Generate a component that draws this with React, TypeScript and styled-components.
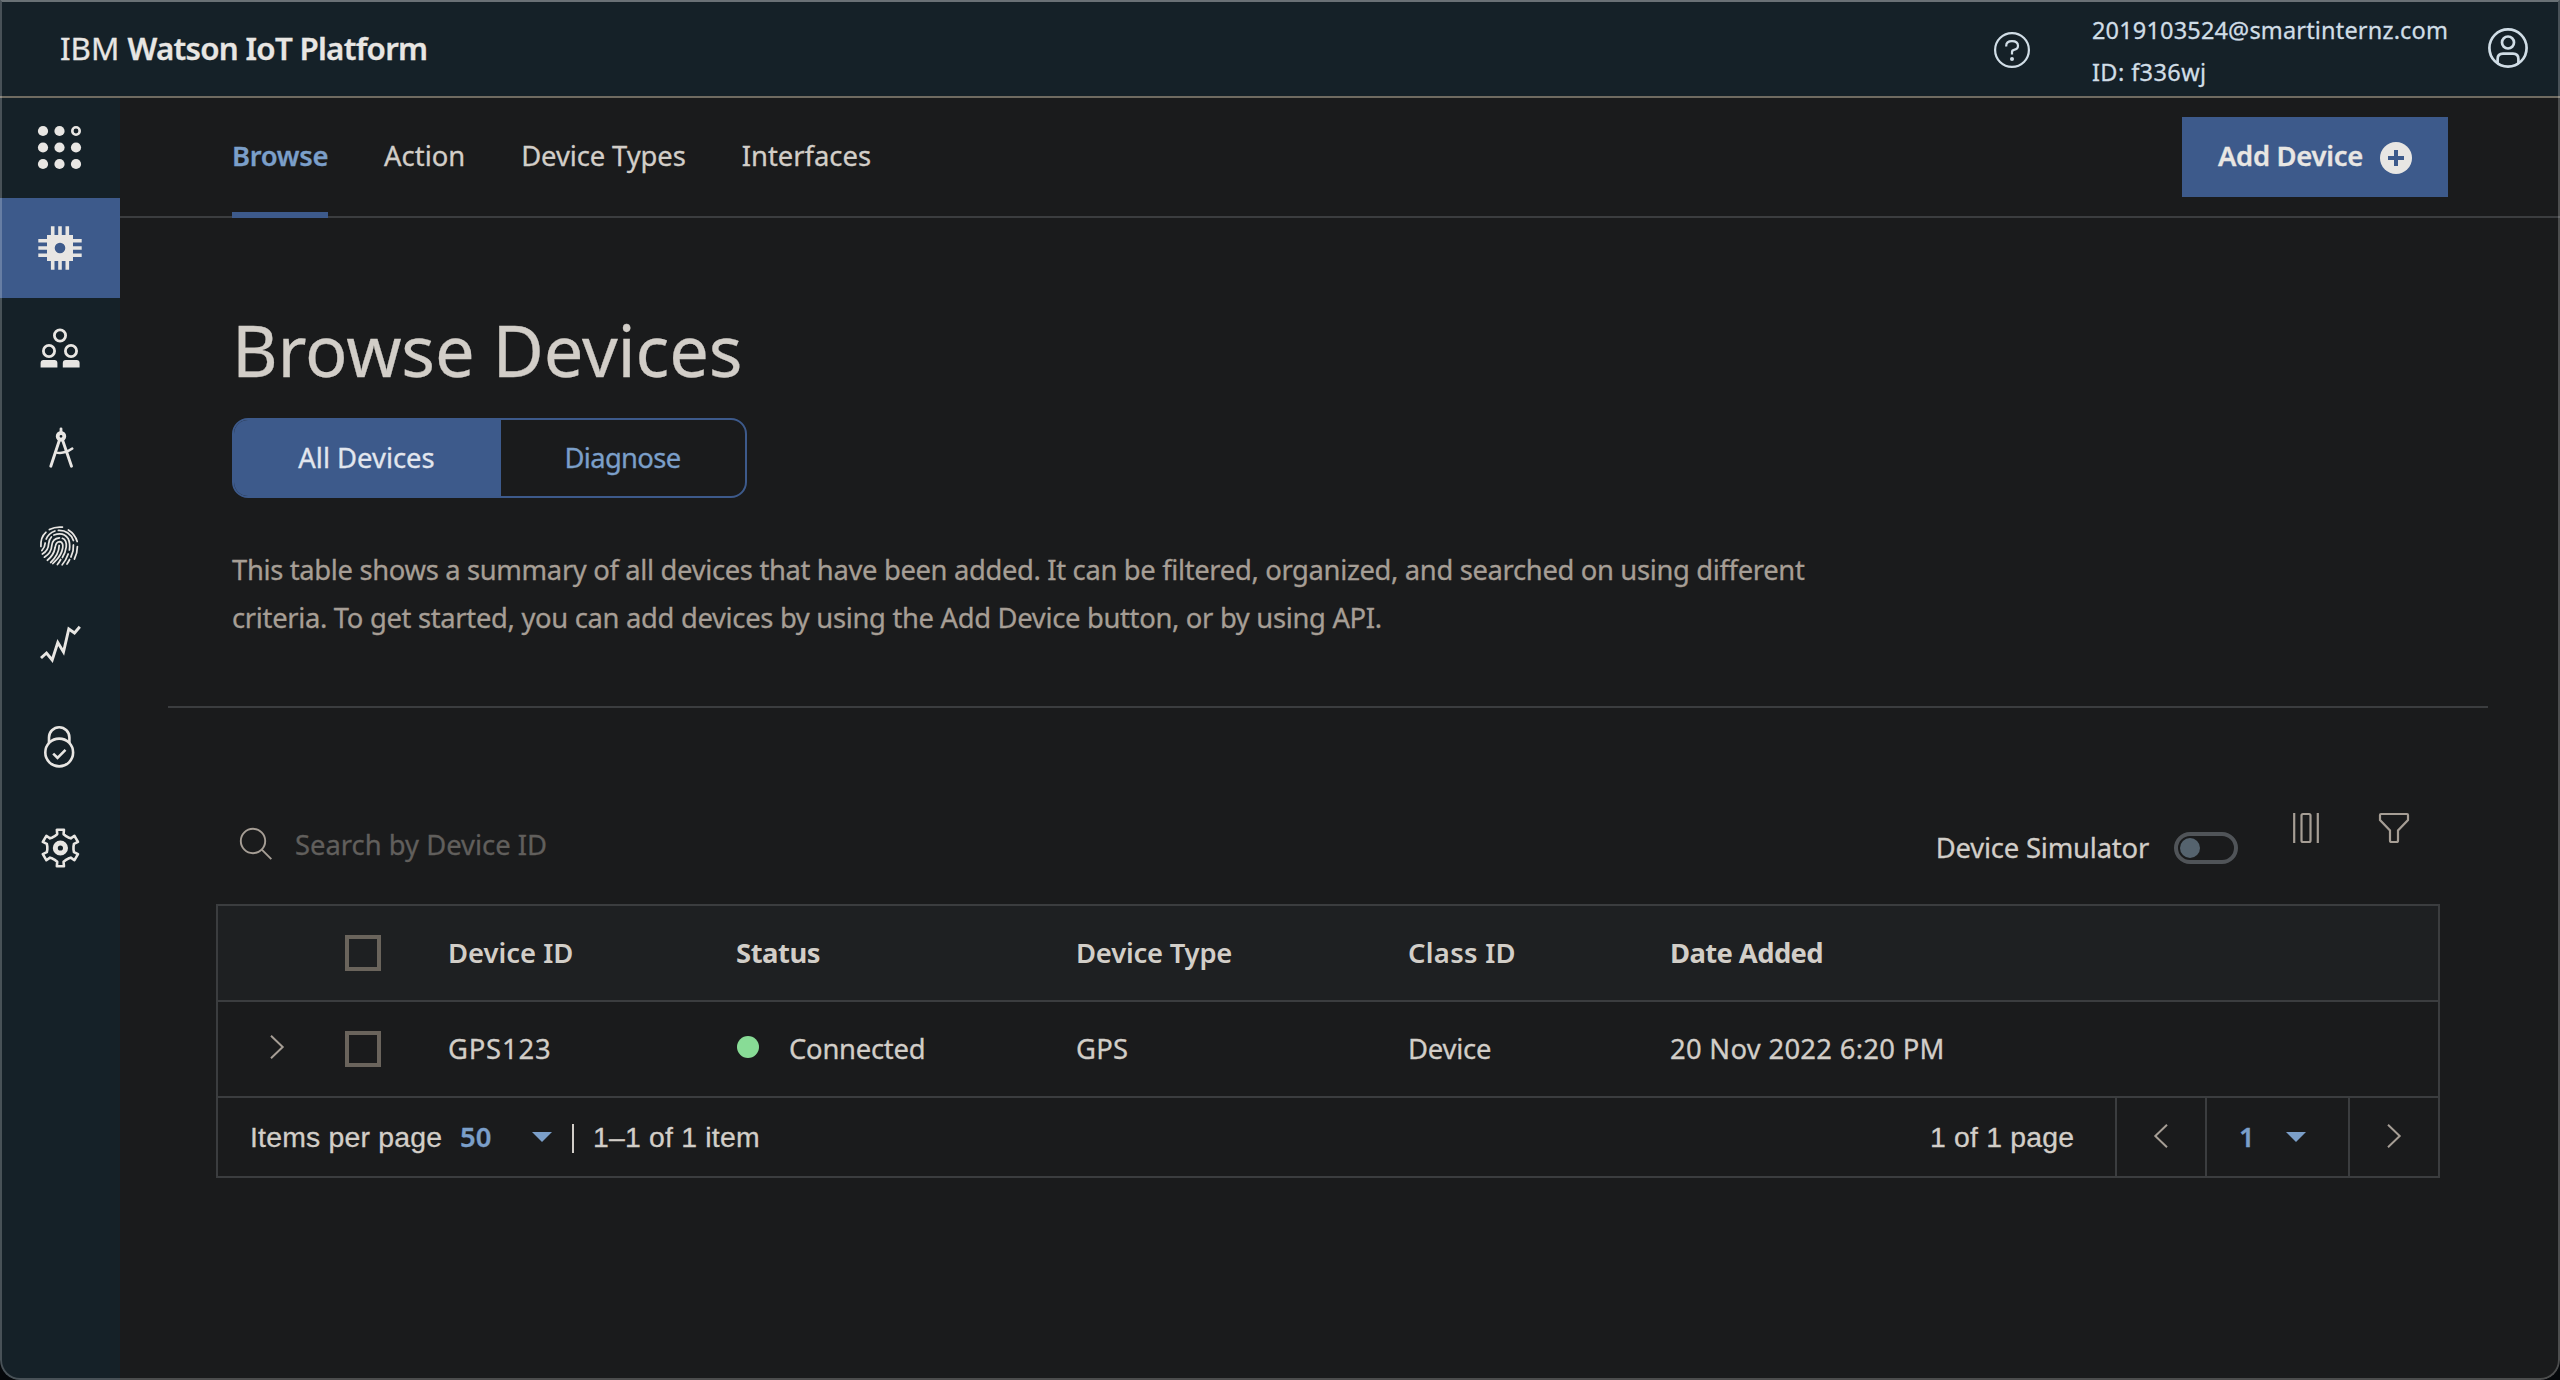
import React from 'react';
import styled, { createGlobalStyle } from 'styled-components';

const c = {
  bg: '#1a1b1c',
  shell: '#152128',
  headRow: '#1e2022',
  blue: '#3d5a8b',
  link: '#7b9fc9',
  text: '#d2cec8',
  muted: '#a69e95',
  white: '#e8e6e3',
  ice: '#d0dde6',
  line: '#3b3d3f',
};

const Global = createGlobalStyle`
  *, *::before, *::after { box-sizing: border-box; }
  body {
    margin: 0;
    background: #05080b;
    font-family: "Noto Sans", "Open Sans", sans-serif;
    font-size: 27.4px;
    font-weight: 400;
    -webkit-text-stroke: 0.3px currentColor;
    color: ${c.text};
  }
  button, input { font: inherit; color: inherit; background: none; border: 0; padding: 0; margin: 0; }
  svg { display: block; flex: none; overflow: visible; }
`;

const Window = styled.div`
  position: relative;
  display: grid;
  grid-template-rows: 98px 1fr;
  width: 2560px;
  height: 1380px;
  overflow: hidden;
  background: ${c.bg};
  border-radius: 0 0 20px 20px;
  &::after {
    content: '';
    position: absolute;
    inset: 0;
    pointer-events: none;
    border: 2px solid rgba(255, 255, 255, 0.22);
    border-top-color: rgba(255, 255, 255, 0.36);
    border-radius: 0 0 20px 20px;
  }
`;

const Track = styled.span<{ $s?: number }>`
  letter-spacing: ${(p) => p.$s ?? 0}px;
  white-space: nowrap;
`;

const Header = styled.header`
  display: flex;
  align-items: center;
  padding: 0 32px 0 60px;
  background: ${c.shell};
  border-bottom: 2px solid #6f6b61;
`;

const Brand = styled.div`
  flex: 1;
  font-size: 31.3px;
  color: ${c.white};
  white-space: pre;
  b { font-weight: 600; letter-spacing: -0.72px; }
`;

const Help = styled.div`
  padding-top: 4px;
  margin-right: 62px;
`;

const Account = styled.div`
  display: flex;
  flex-direction: column;
  width: 396px;
  padding-top: 6px;
  font-size: 23.5px;
  line-height: 42px;
  color: ${c.ice};
`;

const Body = styled.div`
  display: grid;
  grid-template-columns: 120px 1fr;
`;

const Sidebar = styled.nav`
  background: ${c.shell};
`;

const SideItem = styled.div<{ $active?: boolean; $lift?: number }>`
  display: flex;
  align-items: center;
  justify-content: center;
  height: 100px;
  padding: 0 1px ${(p) => (p.$lift ?? 0) * 2}px 0;
  background: ${(p) => (p.$active ? c.blue : 'transparent')};
`;

const Main = styled.main`
  display: flex;
  flex-direction: column;
`;

const TabBar = styled.div`
  display: flex;
  justify-content: space-between;
  height: 120px;
  padding: 0 112px;
  border-bottom: 2px solid ${c.line};
`;

const Tabs = styled.div`
  display: flex;
  gap: 56px;
  height: 120px;
`;

const Tab = styled.div<{ $active?: boolean }>`
  display: flex;
  align-items: center;
  height: 120px;
  padding: ${(p) => (p.$active ? '0' : '0 0 6px')};
  border-bottom: ${(p) => (p.$active ? `6px solid ${c.blue}` : '0')};
  color: ${(p) => (p.$active ? c.link : c.text)};
  font-weight: ${(p) => (p.$active ? 600 : 'inherit')};
`;

const AddButton = styled.button`
  display: flex;
  align-items: center;
  justify-content: space-between;
  width: 266px;
  height: 80px;
  margin-top: 19px;
  padding: 0 36px 3px;
  background: ${c.blue};
  color: ${c.white};
  font-weight: 600;
`;

const Intro = styled.section`
  height: 490px;
  margin: 0 72px 0 48px;
  padding: 88px 64px 0;
  border-bottom: 2px solid ${c.line};
`;

const Title = styled.h1`
  margin: 0 0 24px;
  font-size: 70.4px;
  font-weight: 400;
  line-height: 88px;
  letter-spacing: -0.15px;
`;

const Segments = styled.div`
  display: flex;
  width: 515px;
  height: 80px;
  border: 2px solid ${c.blue};
  border-radius: 16px;
  overflow: hidden;
`;

const Segment = styled.button<{ $active?: boolean }>`
  width: ${(p) => (p.$active ? 267 : 244)}px;
  padding: 0 ${(p) => (p.$active ? 2 : 1)}px 2px 0;
  background: ${(p) => (p.$active ? c.blue : 'transparent')};
  color: ${(p) => (p.$active ? '#e2e6ee' : c.link)};
`;

const Description = styled.p`
  display: flex;
  flex-direction: column;
  margin: 48px 0 0;
  line-height: 48px;
  color: ${c.muted};
`;

const Toolbar = styled.div`
  display: flex;
  align-items: center;
  height: 80px;
  margin: 96px 120px 20px 96px;
  padding: 0 31px 0 24px;
`;

const SearchField = styled.label`
  display: flex;
  flex: 1;
  align-items: center;
  gap: 23px;
  input { width: 600px; height: 44px; outline: none; }
  input::placeholder { color: #615f5c; opacity: 1; }
`;

const SimulatorToggle = styled.div`
  display: flex;
  align-items: center;
  gap: 25px;
  padding-top: 8px;
  > span { padding-bottom: 2px; }
`;

const Switch = styled.div`
  display: flex;
  align-items: center;
  width: 64px;
  height: 32px;
  padding-left: 2px;
  border: 4px solid #505458;
  border-radius: 16px;
  &::before {
    content: '';
    width: 20px;
    height: 20px;
    border-radius: 50%;
    background: #55636e;
  }
`;

const ToolIcons = styled.div`
  display: flex;
  gap: 60px;
  margin-left: 55px;
  padding-bottom: 32px;
`;

const Table = styled.section`
  margin: 0 120px 0 96px;
  border: 2px solid ${c.line};
`;

const Row = styled.div<{ $head?: boolean }>`
  display: grid;
  grid-template-columns: 127px 103px 288px 340px 332px 262px 1fr;
  align-items: center;
  height: 96px;
  border-bottom: 2px solid ${c.line};
  background: ${(p) => (p.$head ? c.headRow : 'transparent')};
`;

const HeadCell = styled.div<{ $w: number }>`
  padding-bottom: 2px;
  font-weight: ${(p) => p.$w};
  -webkit-text-stroke: 0;
`;

const Cell = styled.div`
  padding-bottom: 2px;
`;

const Expand = styled.div`
  padding: 0 0 5px 52px;
`;

const Checkbox = styled.div`
  width: 36px;
  height: 36px;
  border: 4px solid #6a645c;
`;

const Status = styled.div`
  display: flex;
  align-items: center;
  gap: 30px;
  padding: 0 0 2px 1px;
  &::before {
    content: '';
    width: 22px;
    height: 22px;
    margin-top: -2px;
    border-radius: 50%;
    background: #88dc96;
  }
`;

const Pagination = styled.div`
  display: flex;
  align-items: center;
  height: 78px;
  font-family: "Liberation Sans", Arial, sans-serif;
  font-size: 28.4px;
`;

const PerPage = styled.div`
  display: flex;
  flex: 1;
  align-items: center;
  padding-left: 32px;
`;

const Picked = styled.span<{ $w: number }>`
  width: ${(p) => p.$w}px;
  padding: 0 0 2px 1px;
  font-family: "Noto Sans", sans-serif;
  font-size: 27.4px;
  font-weight: 600;
  color: ${c.link};
`;

const Label = styled.span<{ $w: number }>`
  width: ${(p) => p.$w}px;
  padding-top: 1px;
  letter-spacing: 0.2px;
  white-space: nowrap;
`;

const Bar = styled.span`
  width: 2px;
  height: 29px;
  margin: 2px 19px 0 20px;
  background: ${c.text};
`;

const PageCell = styled.div<{ $w: number; $wide?: boolean }>`
  display: flex;
  align-items: center;
  justify-content: ${(p) => (p.$wide ? 'flex-start' : 'center')};
  width: ${(p) => p.$w}px;
  height: 78px;
  padding: ${(p) => (p.$wide ? '0 0 0 31px' : '0 0 3px')};
  border-left: 2px solid ${c.line};
`;

const stroke = (color: string, width: number) => ({ fill: 'none', stroke: color, strokeWidth: width });

const Caret = () => (
  <svg width="20" height="10" viewBox="0 0 20 10"><path d="M0 0H20L10 10Z" fill={c.link} /></svg>
);

const Chevron = ({ left }: { left?: boolean }) => (
  <svg width="14" height="24" viewBox="0 0 14 24">
    <path d={left ? 'M13 .7L1.3 12L13 23.3' : 'M1 .7L12.7 12L1 23.3'} {...stroke(c.muted, 2)} />
  </svg>
);

const AppsIcon = () => (
  <svg width="43" height="43" viewBox="0 0 43 43">
    {[5, 21.5, 38].map((y) =>
      [5, 21.5, 38].map((x) =>
        x === 38 && y === 5 ? (
          <circle key={`${x}-${y}`} cx={x} cy={y} r="3.7" {...stroke(c.white, 2.6)} />
        ) : (
          <circle key={`${x}-${y}`} cx={x} cy={y} r="5.1" fill={c.white} />
        ),
      ),
    )}
  </svg>
);

const ChipIcon = () => (
  <svg width="44" height="44" viewBox="0 0 44 44">
    <path fill={c.white} fillRule="evenodd" d="M9 9H35V35H9ZM22 16.7a5.3 5.3 0 1 0 0 10.6a5.3 5.3 0 1 0 0-10.6Z" />
    <path {...stroke(c.white, 3.6)} d="M14.7 .3V10M22 .3V10M29.3 .3V10M14.7 34V43.7M22 34V43.7M29.3 34V43.7M.3 14.7H10M.3 22H10M.3 29.3H10M34 14.7H43.7M34 22H43.7M34 29.3H43.7" />
  </svg>
);

const PeopleIcon = () => (
  <svg width="40" height="40" viewBox="0 0 40 40">
    <g {...stroke(c.white, 2.8)}>
      <circle cx="20" cy="7.5" r="5.6" />
      <circle cx="9" cy="23" r="5.6" />
      <circle cx="31" cy="23" r="5.6" />
    </g>
    <path fill={c.white} d="M.6 39.5V35Q.6 32 3.6 32H14.4Q17.4 32 17.4 35V39.5ZM22.8 39.5V35Q22.8 32 25.8 32H36.6Q39.6 32 39.6 35V39.5Z" />
  </svg>
);

const CompassIcon = () => (
  <svg width="38" height="40" viewBox="0 0 38 40">
    <circle cx="20" cy="8.3" r="3.3" {...stroke(c.white, 3.8)} />
    <path d="M20 .8V4" {...stroke(c.white, 2.8)} strokeLinecap="round" />
    <path d="M18.3 12.5L9.8 38.2M21.7 12.5L30.5 38.2" {...stroke(c.white, 2.9)} strokeLinecap="round" />
    <path d="M14.5 24.4Q23 26.5 31.3 20.6" {...stroke(c.white, 2.5)} strokeLinecap="round" />
  </svg>
);

const FingerprintIcon = () => (
  <svg width="40" height="40" viewBox="0 0 40 40">
    <path
      {...stroke(c.white, 1.75)}
      strokeLinecap="round"
      transform="translate(-.6 0)"
      d="M10 3.6Q16 .4 23 1.2M29 4Q35.5 8 37.8 15.5M1.5 20.5Q1 11 6.5 6.3M2.5 24.5Q5.6 21 5.8 17M6.8 13Q9 7.5 15.5 5M19 4.4Q30 4 34 14.5M3 28Q9 24.5 9.2 18Q9.6 13.5 12 11M14.5 9Q24 5.5 28.7 12.5Q31 17 30 24M5 31.2Q12 27 12.4 19.5Q13 12.5 20 11.8M23 12.3Q27.5 14 26.8 21Q26 27 23 31.5M8 34.2Q14.5 29 15.7 21.5Q16.5 15.5 20.5 15.6Q24.2 16.5 23.3 22Q22 29 16.5 34.5M19.8 19.5Q19.5 28.5 11.3 36.5M34 19Q34.5 25 31.5 31M38 20.5Q38 27 35 33M28.8 28Q26.5 34.5 22.8 38.8M21.3 33.5Q20 36 18 38.5M16 34.8L13.5 37.5M30.2 33.5Q29 36 27.6 38"
    />
  </svg>
);

const TrendIcon = () => (
  <svg width="40" height="38" viewBox="0 0 40 38">
    <path d="M1 32L6.5 27L12.2 34L17.8 16.5L23.5 26L28.8 3L34.5 7L39.8 .8" {...stroke(c.white, 2.9)} />
  </svg>
);

const LockIcon = () => (
  <svg width="32" height="42" viewBox="0 0 32 42">
    <g {...stroke(c.white, 2.6)}>
      <circle cx="15.2" cy="26.5" r="13.9" />
      <path d="M5 17V11.5A10.2 10.2 0 0 1 25.4 11.5V17M9.2 27.6L13.5 31.8L21.5 23.8" />
    </g>
  </svg>
);

const gearPoints = Array.from({ length: 6 }, (_, i) =>
  [[-23, 13.2], [-13, 14.2], [-11, 18.6], [11, 18.6], [13, 14.2], [23, 13.2]].map(([off, r]) => {
    const a = ((i * 60 + off) * Math.PI) / 180;
    return `${(20.4 + r * Math.sin(a)).toFixed(2)},${(20 - r * Math.cos(a)).toFixed(2)}`;
  }),
).flat().join(' ');

const GearIcon = () => (
  <svg width="40" height="40" viewBox="0 0 40 40">
    <polygon points={gearPoints} {...stroke(c.white, 2.6)} strokeLinejoin="round" />
    <circle cx="20.4" cy="20" r="5.1" {...stroke(c.white, 5)} />
  </svg>
);

const HelpIcon = () => (
  <svg width="36" height="36" viewBox="0 0 36 36">
    <circle cx="18" cy="18" r="16.9" {...stroke(c.ice, 2.2)} />
    <path d="M12.2 14.6V14Q12.2 9.2 18 9.2Q24 9.2 24 13.8Q24 17.3 20 17.8Q18 18.2 18 20V22.6" {...stroke(c.ice, 2.2)} />
    <circle cx="18" cy="27" r="2" fill={c.ice} />
  </svg>
);

const UserIcon = () => (
  <svg width="40" height="40" viewBox="0 0 40 40">
    <g {...stroke(c.ice, 2.7)}>
      <circle cx="20" cy="20" r="18.6" />
      <circle cx="20" cy="14.5" r="6" />
      <path d="M9.6 35V31Q9.6 25.6 15 25.6H25Q30.4 25.6 30.4 31V35" />
    </g>
  </svg>
);

const PlusIcon = () => (
  <svg width="32" height="32" viewBox="0 0 32 32">
    <g transform="translate(0 2)">
      <circle cx="16" cy="16" r="16" fill={c.white} />
      <path d="M16 8V24M8 16H24" {...stroke(c.blue, 4)} />
    </g>
  </svg>
);

const SearchIcon = () => (
  <svg width="32" height="32" viewBox="0 0 32 32">
    <circle cx="13" cy="13" r="12.2" {...stroke(c.muted, 1.9)} />
    <path d="M21.8 21.6L31.3 31.2" {...stroke(c.muted, 1.9)} />
  </svg>
);

const ColumnsIcon = () => (
  <svg width="26" height="30" viewBox="0 0 26 30">
    <path d="M1.2 0V30M24.8 0V30" {...stroke(c.muted, 2.2)} />
    <rect x="8.5" y="1" width="9" height="28" rx="1.5" {...stroke(c.muted, 2.2)} />
  </svg>
);

const FilterIcon = () => (
  <svg width="30" height="30" viewBox="0 0 30 30">
    <path d="M2 1H28Q29 1 29 2V7L19 17.5V27.5Q19 29 17.5 29H12.5Q11 29 11 27.5V17.5L1 7V2Q1 1 2 1Z" {...stroke(c.muted, 2.2)} />
  </svg>
);

const sideItems = [
  { Icon: AppsIcon, lift: 0.5 },
  { Icon: ChipIcon },
  { Icon: PeopleIcon },
  { Icon: CompassIcon },
  { Icon: FingerprintIcon, lift: 2 },
  { Icon: TrendIcon, lift: 3.5 },
  { Icon: LockIcon, lift: 1 },
  { Icon: GearIcon },
];

export default function App() {
  return (
    <>
      <Global />
      <Window>
        <Header>
          <Brand>IBM <b>Watson IoT Platform</b></Brand>
          <Help><HelpIcon /></Help>
          <Account>
            <Track $s={0.17}>2019103524@smartinternz.com</Track>
            <Track $s={0.4}>ID: f336wj</Track>
          </Account>
          <UserIcon />
        </Header>
        <Body>
          <Sidebar>
            {sideItems.map(({ Icon, lift }, i) => (
              <SideItem key={i} $active={i === 1} $lift={lift}><Icon /></SideItem>
            ))}
          </Sidebar>
          <Main>
            <TabBar>
              <Tabs>
                <Tab $active><Track $s={-0.32}>Browse</Track></Tab>
                <Tab>Action</Tab>
                <Tab><Track $s={-0.1}>Device Types</Track></Tab>
                <Tab>Interfaces</Tab>
              </Tabs>
              <AddButton><Track $s={-0.3}>Add Device</Track><PlusIcon /></AddButton>
            </TabBar>
            <Intro>
              <Title>Browse Devices</Title>
              <Segments>
                <Segment $active><Track>All Devices</Track></Segment>
                <Segment><Track $s={-0.65}>Diagnose</Track></Segment>
              </Segments>
              <Description>
                <Track $s={-0.345}>This table shows a summary of all devices that have been added. It can be filtered, organized, and searched on using different</Track>
                <Track $s={-0.32}>criteria. To get started, you can add devices by using the Add Device button, or by using API.</Track>
              </Description>
            </Intro>
            <Toolbar>
              <SearchField>
                <SearchIcon />
                <input placeholder="Search by Device ID" />
              </SearchField>
              <SimulatorToggle>
                <Track $s={-0.2}>Device Simulator</Track>
                <Switch />
              </SimulatorToggle>
              <ToolIcons><ColumnsIcon /><FilterIcon /></ToolIcons>
            </Toolbar>
            <Table>
              <Row $head>
                <div />
                <Checkbox />
                <HeadCell $w={600}><Track>Device ID</Track></HeadCell>
                <HeadCell $w={700}><Track $s={-0.45}>Status</Track></HeadCell>
                <HeadCell $w={600}><Track $s={-0.2}>Device Type</Track></HeadCell>
                <HeadCell $w={600}><Track $s={0.3}>Class ID</Track></HeadCell>
                <HeadCell $w={700}><Track $s={-0.6}>Date Added</Track></HeadCell>
              </Row>
              <Row>
                <Expand><Chevron /></Expand>
                <Checkbox />
                <Cell><Track $s={0.8}>GPS123</Track></Cell>
                <Status><Track $s={-0.25}>Connected</Track></Status>
                <Cell><Track $s={0.3}>GPS</Track></Cell>
                <Cell><Track $s={-0.2}>Device</Track></Cell>
                <Cell><Track $s={0.3}>20 Nov 2022 6:20 PM</Track></Cell>
              </Row>
              <Pagination>
                <PerPage>
                  <Label $w={209}>Items per page</Label>
                  <Picked $w={73}>50</Picked>
                  <Caret />
                  <Bar />
                  <Label $w={180}>1–1 of 1 item</Label>
                </PerPage>
                <Label $w={185}>1 of 1 page</Label>
                <PageCell $w={90}><Chevron left /></PageCell>
                <PageCell $w={143} $wide><Picked $w={48}>1</Picked><Caret /></PageCell>
                <PageCell $w={90}><Chevron /></PageCell>
              </Pagination>
            </Table>
          </Main>
        </Body>
      </Window>
    </>
  );
}
